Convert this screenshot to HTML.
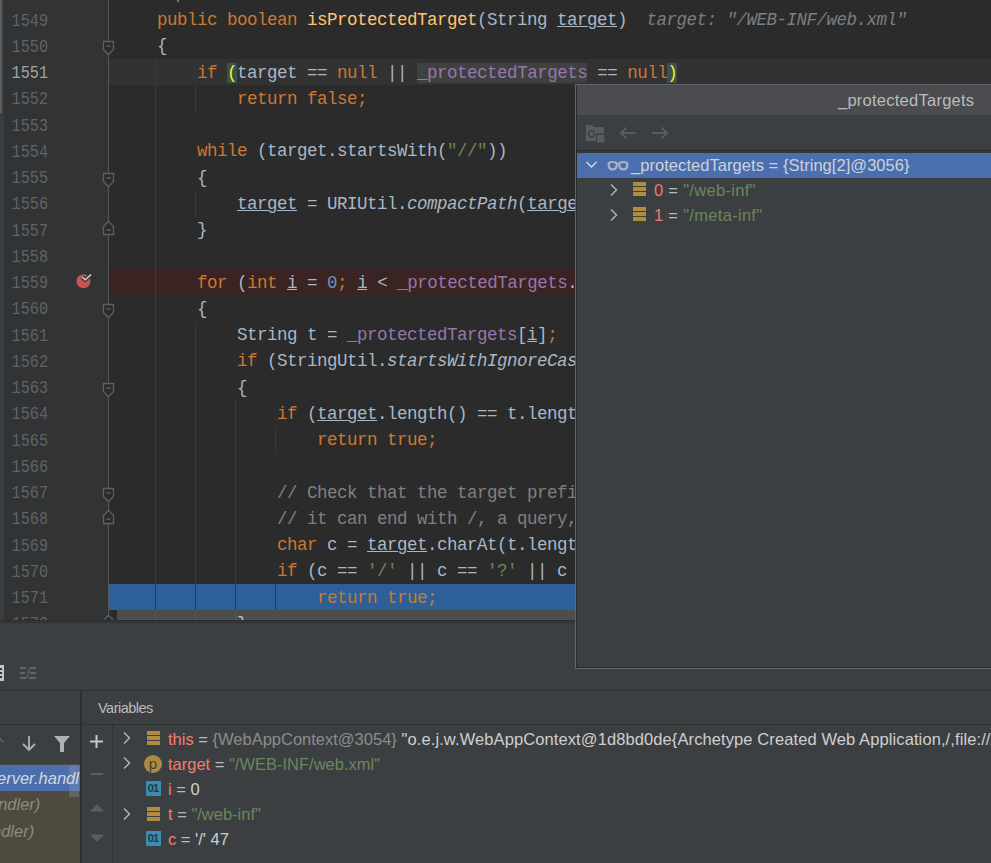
<!DOCTYPE html>
<html><head><meta charset="utf-8">
<style>
*{margin:0;padding:0;box-sizing:border-box}
html,body{width:991px;height:863px;overflow:hidden;background:#3C3F41;position:relative}
#ed{position:absolute;left:0;top:0;width:991px;height:620px;background:#2B2B2B;overflow:hidden}
#gut{position:absolute;left:4px;top:0;width:104px;height:620px;background:#313335}
#gutedge{position:absolute;left:0;top:0;width:4px;height:620px;background:#3A3D3F}
#gutedge2{position:absolute;left:0;top:0;width:2px;height:113px;background:#5C5D5F}
#gutedge3{position:absolute;left:0;top:113px;width:2px;height:507px;background:#3C3F41}
#gutline{position:absolute;left:108px;top:0;width:1px;height:620px;background:#555657}
.num{position:absolute;left:-23px;padding-top:2px;width:71px;text-align:right;height:26.25px;line-height:26.25px;font-family:"Liberation Mono",monospace;font-size:18.6px;color:#606366;transform:scaleX(0.815);transform-origin:right center}
.num.cur{color:#A4A3A3}
.ln{position:absolute;left:117px;padding-top:0.5px;height:26.25px;line-height:26.25px;white-space:pre;font-family:"Liberation Mono",monospace;font-size:17.5px;letter-spacing:-0.5px;color:#A9B7C6}
.ig{position:absolute;width:1px;background:#393939}
.bm{background:#3B514D;color:#FFEF28}
.hl{background:#404040}
.band{position:absolute;left:109px;width:882px;height:26.25px}
.fold{position:absolute;left:102px}

.tr{position:absolute;height:25px;line-height:25px;font-size:16.5px;white-space:pre}
.arr{position:absolute;width:12.5px;height:14px;background:linear-gradient(#B08B40 0 3.6px, transparent 3.6px 5.2px, #B08B40 5.2px 8.8px, transparent 8.8px 10.4px, #B08B40 10.4px 14px)}
.vn{color:#F07D72}
.eq{color:#BBBBBB}
.ui{font-family:"Liberation Sans",sans-serif}
</style></head><body>
<div id="ed">
  <div id="gut"></div>
  <div id="gutedge"></div><div id="gutedge2"></div><div id="gutedge3"></div>
  <div class="band" style="top:59.00px;background:#323232"></div>
  <div class="band" style="top:269.00px;background:#3A2323"></div>
  <div class="band" style="top:584.00px;background:#2D5F99"></div>
  <div class="ig" style="left:155px;top:59.00px;height:577.50px"></div><div class="ig" style="left:195px;top:85.25px;height:26.25px"></div><div class="ig" style="left:195px;top:190.25px;height:26.25px"></div><div class="ig" style="left:195px;top:321.50px;height:315.00px"></div><div class="ig" style="left:235px;top:400.25px;height:236.25px"></div><div class="ig" style="left:275px;top:426.50px;height:26.25px"></div><div class="ig" style="left:275px;top:584.00px;height:26.25px"></div>
  <div id="gutline"></div>
  <div class="num" style="top:-19.75px">1548</div><div class="num" style="top:6.50px">1549</div><div class="num" style="top:32.75px">1550</div><div class="num cur" style="top:59.00px">1551</div><div class="num" style="top:85.25px">1552</div><div class="num" style="top:111.50px">1553</div><div class="num" style="top:137.75px">1554</div><div class="num" style="top:164.00px">1555</div><div class="num" style="top:190.25px">1556</div><div class="num" style="top:216.50px">1557</div><div class="num" style="top:242.75px">1558</div><div class="num" style="top:269.00px">1559</div><div class="num" style="top:295.25px">1560</div><div class="num" style="top:321.50px">1561</div><div class="num" style="top:347.75px">1562</div><div class="num" style="top:374.00px">1563</div><div class="num" style="top:400.25px">1564</div><div class="num" style="top:426.50px">1565</div><div class="num" style="top:452.75px">1566</div><div class="num" style="top:479.00px">1567</div><div class="num" style="top:505.25px">1568</div><div class="num" style="top:531.50px">1569</div><div class="num" style="top:557.75px">1570</div><div class="num" style="top:584.00px">1571</div><div class="num" style="top:610.25px">1572</div>
  <div class="ln" style="top:6.50px"><span style="color:#CC7832;">    public boolean </span><span style="color:#FFC66D;">isProtectedTarget</span><span style="color:#A9B7C6;">(String </span><span style="color:#A9B7C6;text-decoration:underline;text-underline-offset:1px;text-decoration-thickness:1px;">target</span><span style="color:#A9B7C6;">)</span></div><div class="ln" style="top:32.75px"><span style="color:#A9B7C6;">    {</span></div><div class="ln" style="top:59.00px"><span style="color:#CC7832;">        if </span><span class="bm" style="">(</span><span style="color:#A9B7C6;">target == </span><span style="color:#CC7832;">null</span><span style="color:#A9B7C6;"> || </span><span class="hl" style="color:#9876AA;">_protectedTargets</span><span style="color:#A9B7C6;"> == </span><span style="color:#CC7832;">null</span><span class="bm" style="">)</span></div><div class="ln" style="top:85.25px"><span style="color:#CC7832;">            return false;</span></div><div class="ln" style="top:111.50px"></div><div class="ln" style="top:137.75px"><span style="color:#CC7832;">        while </span><span style="color:#A9B7C6;">(target.startsWith(</span><span style="color:#6A8759;">"//"</span><span style="color:#A9B7C6;">))</span></div><div class="ln" style="top:164.00px"><span style="color:#A9B7C6;">        {</span></div><div class="ln" style="top:190.25px"><span style="color:#A9B7C6;">            </span><span style="color:#A9B7C6;text-decoration:underline;text-underline-offset:1px;text-decoration-thickness:1px;">target</span><span style="color:#A9B7C6;"> = URIUtil.</span><span style="color:#A9B7C6;font-style:italic;">compactPath</span><span style="color:#A9B7C6;">(</span><span style="color:#A9B7C6;text-decoration:underline;text-underline-offset:1px;text-decoration-thickness:1px;">target</span><span style="color:#CC7832;">);</span></div><div class="ln" style="top:216.50px"><span style="color:#A9B7C6;">        }</span></div><div class="ln" style="top:242.75px"></div><div class="ln" style="top:269.00px"><span style="color:#CC7832;">        for </span><span style="color:#A9B7C6;">(</span><span style="color:#CC7832;">int </span><span style="color:#A9B7C6;text-decoration:underline;text-underline-offset:1px;text-decoration-thickness:1px;">i</span><span style="color:#A9B7C6;"> = </span><span style="color:#6897BB;">0</span><span style="color:#CC7832;">; </span><span style="color:#A9B7C6;text-decoration:underline;text-underline-offset:1px;text-decoration-thickness:1px;">i</span><span style="color:#A9B7C6;"> &lt; </span><span style="color:#9876AA;">_protectedTargets</span><span style="color:#A9B7C6;">.length; </span><span style="color:#A9B7C6;text-decoration:underline;text-underline-offset:1px;text-decoration-thickness:1px;">i</span><span style="color:#A9B7C6;">++)</span></div><div class="ln" style="top:295.25px"><span style="color:#A9B7C6;">        {</span></div><div class="ln" style="top:321.50px"><span style="color:#A9B7C6;">            String t = </span><span style="color:#9876AA;">_protectedTargets</span><span style="color:#A9B7C6;">[</span><span style="color:#A9B7C6;text-decoration:underline;text-underline-offset:1px;text-decoration-thickness:1px;">i</span><span style="color:#A9B7C6;">]</span><span style="color:#CC7832;">;</span></div><div class="ln" style="top:347.75px"><span style="color:#CC7832;">            if </span><span style="color:#A9B7C6;">(StringUtil.</span><span style="color:#A9B7C6;font-style:italic;">startsWithIgnoreCase</span><span style="color:#A9B7C6;">(</span><span style="color:#A9B7C6;text-decoration:underline;text-underline-offset:1px;text-decoration-thickness:1px;">target</span><span style="color:#A9B7C6;">, t))</span></div><div class="ln" style="top:374.00px"><span style="color:#A9B7C6;">            {</span></div><div class="ln" style="top:400.25px"><span style="color:#CC7832;">                if </span><span style="color:#A9B7C6;">(</span><span style="color:#A9B7C6;text-decoration:underline;text-underline-offset:1px;text-decoration-thickness:1px;">target</span><span style="color:#A9B7C6;">.length() == t.length())</span></div><div class="ln" style="top:426.50px"><span style="color:#CC7832;">                    return true;</span></div><div class="ln" style="top:452.75px"></div><div class="ln" style="top:479.00px"><span style="color:#808080;">                // Check that the target prefix really is a path segment, thus</span></div><div class="ln" style="top:505.25px"><span style="color:#808080;">                // it can end with /, a query, a ; or a #</span></div><div class="ln" style="top:531.50px"><span style="color:#CC7832;">                char </span><span style="color:#A9B7C6;">c = </span><span style="color:#A9B7C6;text-decoration:underline;text-underline-offset:1px;text-decoration-thickness:1px;">target</span><span style="color:#A9B7C6;">.charAt(t.length());</span></div><div class="ln" style="top:557.75px"><span style="color:#CC7832;">                if </span><span style="color:#A9B7C6;">(c == </span><span style="color:#6A8759;">'/'</span><span style="color:#A9B7C6;"> || c == </span><span style="color:#6A8759;">'?'</span><span style="color:#A9B7C6;"> || c == </span><span style="color:#6A8759;">'#'</span><span style="color:#A9B7C6;">)</span></div><div class="ln" style="top:584.00px"><span style="color:#CC7832;">                    return true;</span></div><div class="ln" style="top:610.25px"><span style="color:#A9B7C6;">            }</span></div>
  <div class="ln" style="top:6.50px;left:646.5px;color:#7A7E85;font-style:italic">target: "/WEB-INF/web.xml"</div>
  <svg class="fold" style="top:40.38px" width="13" height="16" viewBox="0 0 13 16"><path d="M1.5 1.5 H11.5 V9.5 L6.5 14.5 L1.5 9.5 Z" fill="#2B2B2B" stroke="#5F6062" stroke-width="1.3"/><path d="M4.5 6 H8.5" stroke="#7A7B7D" stroke-width="1"/></svg><svg class="fold" style="top:171.62px" width="13" height="16" viewBox="0 0 13 16"><path d="M1.5 1.5 H11.5 V9.5 L6.5 14.5 L1.5 9.5 Z" fill="#2B2B2B" stroke="#5F6062" stroke-width="1.3"/><path d="M4.5 6 H8.5" stroke="#7A7B7D" stroke-width="1"/></svg><svg class="fold" style="top:220.12px" width="13" height="16" viewBox="0 0 13 16"><path d="M1.5 14.5 H11.5 V6.5 L6.5 1.5 L1.5 6.5 Z" fill="#2B2B2B" stroke="#5F6062" stroke-width="1.3"/><path d="M4.5 10 H8.5" stroke="#7A7B7D" stroke-width="1"/></svg><svg class="fold" style="top:302.88px" width="13" height="16" viewBox="0 0 13 16"><path d="M1.5 1.5 H11.5 V9.5 L6.5 14.5 L1.5 9.5 Z" fill="#2B2B2B" stroke="#5F6062" stroke-width="1.3"/><path d="M4.5 6 H8.5" stroke="#7A7B7D" stroke-width="1"/></svg><svg class="fold" style="top:381.62px" width="13" height="16" viewBox="0 0 13 16"><path d="M1.5 1.5 H11.5 V9.5 L6.5 14.5 L1.5 9.5 Z" fill="#2B2B2B" stroke="#5F6062" stroke-width="1.3"/><path d="M4.5 6 H8.5" stroke="#7A7B7D" stroke-width="1"/></svg><svg class="fold" style="top:486.62px" width="13" height="16" viewBox="0 0 13 16"><path d="M1.5 1.5 H11.5 V9.5 L6.5 14.5 L1.5 9.5 Z" fill="#2B2B2B" stroke="#5F6062" stroke-width="1.3"/><path d="M4.5 6 H8.5" stroke="#7A7B7D" stroke-width="1"/></svg><svg class="fold" style="top:508.88px" width="13" height="16" viewBox="0 0 13 16"><path d="M1.5 14.5 H11.5 V6.5 L6.5 1.5 L1.5 6.5 Z" fill="#2B2B2B" stroke="#5F6062" stroke-width="1.3"/><path d="M4.5 10 H8.5" stroke="#7A7B7D" stroke-width="1"/></svg><svg class="fold" style="top:613.88px" width="13" height="16" viewBox="0 0 13 16"><path d="M1.5 14.5 H11.5 V6.5 L6.5 1.5 L1.5 6.5 Z" fill="#2B2B2B" stroke="#5F6062" stroke-width="1.3"/><path d="M4.5 10 H8.5" stroke="#7A7B7D" stroke-width="1"/></svg>
  <svg style="position:absolute;left:74px;top:270px" width="20" height="20" viewBox="0 0 20 20"><circle cx="9.5" cy="11.3" r="7" fill="#C75450"/><path d="M8 7 L11.3 9.8 L17 4.5" fill="none" stroke="#2B2B2B" stroke-width="4"/><path d="M8 7 L11.3 9.8 L17 4.5" fill="none" stroke="#BDBDBD" stroke-width="1.8"/></svg>
  <div style="position:absolute;left:117px;top:610px;width:874px;height:10px;background:rgba(255,255,255,0.165)"></div>
</div>
<div style="position:absolute;left:0;top:620px;width:991px;height:1px;background:#2B2B2B"></div><div style="position:absolute;left:0;top:621px;width:991px;height:1px;background:#37393B"></div><div style="position:absolute;left:0;top:622px;width:991px;height:1px;background:#2E3031"></div>

<!-- bottom panel -->
<div style="position:absolute;left:0;top:623px;width:991px;height:240px;background:#3C3F41"></div>
<div style="position:absolute;left:-3px;top:665px;width:7px;height:16px;background:#C4C4C4"></div>
<div style="position:absolute;left:0;top:668px;width:2px;height:2px;background:#333"></div>
<div style="position:absolute;left:0;top:672px;width:2px;height:2px;background:#333"></div>
<div style="position:absolute;left:0;top:676px;width:2px;height:2px;background:#333"></div>
<svg style="position:absolute;left:19px;top:665px" width="18" height="16" viewBox="0 0 18 16"><path d="M1 3 H7 M1 8 H6 M1 13 H7 M11 3 H17 M11 8 H17 M10 13 H17" stroke="#646566" stroke-width="2"/><path d="M8 13 L10.5 3" stroke="#646566" stroke-width="1.2"/></svg>
<div style="position:absolute;left:0;top:689.5px;width:991px;height:1.5px;background:#2F3032"></div>
<div class="ui" style="position:absolute;left:98px;top:700px;font-size:14.5px;letter-spacing:-0.5px;color:#BBBBBB">Variables</div>
<div style="position:absolute;left:0;top:724px;width:991px;height:1px;background:#323232"></div>
<div style="position:absolute;left:80px;top:691px;width:2px;height:172px;background:#2E2F30"></div>
<div style="position:absolute;left:112px;top:725px;width:1px;height:138px;background:#323232"></div>
<!-- frames -->
<svg style="position:absolute;left:-6px;top:735px" width="10" height="16" viewBox="0 0 10 16"><path d="M0.5 7.5 L5 3 L9.5 7.5" fill="none" stroke="#5A5D5F" stroke-width="1.8"/></svg>
<svg style="position:absolute;left:20px;top:734px" width="18" height="18" viewBox="0 0 18 18"><path d="M9 2 V16 M3 10 L9 16 L15 10" fill="none" stroke="#AFB1B3" stroke-width="1.8"/></svg>
<svg style="position:absolute;left:53px;top:735px" width="18" height="18" viewBox="0 0 18 18"><path d="M1 1 H17 L11 8 V17 H7 V8 Z" fill="#AFB1B3"/></svg>
<div style="position:absolute;left:0;top:764px;width:80px;height:99px;background:#4E4A3D"></div>
<div style="position:absolute;left:0;top:765px;width:80px;height:26px;background:#4B6EAF"></div>
<div style="position:absolute;left:69px;top:765px;width:10px;height:32px;background:rgba(140,150,170,0.35)"></div>
<div class="ui" style="position:absolute;left:-3px;top:769px;font-size:16.5px;font-style:italic;color:#D4D8DE;white-space:pre">erver.handl</div>
<div class="ui" style="position:absolute;left:-11px;top:795px;font-size:16.5px;font-style:italic;color:#8E8B82;white-space:pre">andler)</div>
<div class="ui" style="position:absolute;left:-8px;top:822px;font-size:16.5px;font-style:italic;color:#8E8B82;white-space:pre">ndler)</div>
<!-- var toolbar -->
<svg style="position:absolute;left:89px;top:734px" width="15" height="15" viewBox="0 0 15 15"><path d="M7.5 1 V14 M1 7.5 H14" stroke="#C8C8C8" stroke-width="2"/></svg>
<div style="position:absolute;left:91px;top:773px;width:12px;height:2px;background:#5A5D5F"></div>
<svg style="position:absolute;left:89px;top:802px" width="16" height="10" viewBox="0 0 16 10"><path d="M1 9.5 L8 2 L15 9.5 Z" fill="#5A5D5F"/></svg>
<svg style="position:absolute;left:89px;top:834px" width="16" height="10" viewBox="0 0 16 10"><path d="M1 0.5 L8 8 L15 0.5 Z" fill="#5A5D5F"/></svg>
<!-- variables tree -->
<svg style="position:absolute;left:122px;top:731.4px" width="10" height="14" viewBox="0 0 10 14"><path d="M2 1.5 L7.5 7 L2 12.5" fill="none" stroke="#AFB1B3" stroke-width="1.5"/></svg>
<div class="arr" style="left:147px;top:731.4px"></div>
<div class="ui tr" style="left:168px;top:726.9px"><span class="vn">this</span><span class="eq"> = </span><span style="color:#8C8C8C">{WebAppContext@3054}</span><span style="color:#CFCFCF;letter-spacing:0.1px"> "o.e.j.w.WebAppContext@1d8bd0de{Archetype Created Web Application,/,file:///D:/</span></div>
<svg style="position:absolute;left:122px;top:756.4px" width="10" height="14" viewBox="0 0 10 14"><path d="M2 1.5 L7.5 7 L2 12.5" fill="none" stroke="#AFB1B3" stroke-width="1.5"/></svg>
<div style="position:absolute;left:144px;top:755.2px;width:18px;height:18px;border-radius:50%;background:#AD8A44;color:#3C3F41;font:15px 'Liberation Sans';text-align:center;line-height:17px">p</div>
<div class="ui tr" style="left:168px;top:751.9px"><span class="vn">target</span><span class="eq"> = </span><span style="color:#6A8759">"/WEB-INF/web.xml"</span></div>
<div style="position:absolute;left:145.5px;top:781.3px;width:15px;height:15px;background:#3A8DAF;color:#263844;font:bold 11px 'Liberation Sans';text-align:center;line-height:15px;letter-spacing:-0.8px">01</div>
<div class="ui tr" style="left:168px;top:777.0px"><span class="vn">i</span><span class="eq"> = </span><span style="color:#CFCFCF">0</span></div>
<svg style="position:absolute;left:122px;top:806.5px" width="10" height="14" viewBox="0 0 10 14"><path d="M2 1.5 L7.5 7 L2 12.5" fill="none" stroke="#AFB1B3" stroke-width="1.5"/></svg>
<div class="arr" style="left:147px;top:806.5px"></div>
<div class="ui tr" style="left:168px;top:802.0px"><span class="vn">t</span><span class="eq"> = </span><span style="color:#6A8759">"/web-inf"</span></div>
<div style="position:absolute;left:145.5px;top:831.3px;width:15px;height:15px;background:#3A8DAF;color:#263844;font:bold 11px 'Liberation Sans';text-align:center;line-height:15px;letter-spacing:-0.8px">01</div>
<div class="ui tr" style="left:168px;top:827.1px"><span class="vn">c</span><span class="eq"> = </span><span style="color:#CFCFCF">'/' 47</span></div>

<!-- popup -->
<div id="pop" style="position:absolute;left:575px;top:84px;width:420px;height:585px;background:#646566;">
  <div style="position:absolute;left:1px;top:1px;right:0;bottom:1px;background:#2B2B2B"></div>
  <div style="position:absolute;left:2px;top:1px;right:0;height:30px;background:#4A4C4F"></div>
  <div class="ui" style="position:absolute;left:263px;top:7px;font-size:16.5px;letter-spacing:0.25px;color:#BBBBBB;white-space:pre">_protectedTargets</div>
  <div style="position:absolute;left:2px;top:31px;right:0;height:35px;background:#3C3F41"></div>
  <svg style="position:absolute;left:10px;top:40px" width="22" height="22" viewBox="0 0 22 22">
    <path d="M1 1 H7 L9 3 H19 V9.5 H11 V17 H1 Z" fill="#595B5D"/>
    <circle cx="6.5" cy="10" r="3" fill="none" stroke="#3C3F41" stroke-width="1.3"/>
    <rect x="12" y="11" width="7.5" height="7.5" fill="#595B5D"/>
  </svg>
  <svg style="position:absolute;left:43px;top:41px" width="20" height="16" viewBox="0 0 20 16"><path d="M17.5 8 H3 M8.5 2.5 L3 8 L8.5 13.5" fill="none" stroke="#595B5D" stroke-width="2"/></svg>
  <svg style="position:absolute;left:75px;top:41px" width="20" height="16" viewBox="0 0 20 16"><path d="M2 8 H17 M11.5 2.5 L17 8 L11.5 13.5" fill="none" stroke="#595B5D" stroke-width="2"/></svg>
  <div style="position:absolute;left:2px;top:66px;right:0;bottom:2px;background:#3C3F41"></div>
  <div style="position:absolute;left:2px;top:66px;right:0;height:3px;background:#333537"></div><div style="position:absolute;left:2px;top:66px;right:0;height:1px;background:#2B2B2B"></div>
  <div style="position:absolute;left:2px;top:69px;right:0;height:25px;background:#4B6EAF"></div>
  <svg style="position:absolute;left:10px;top:75.5px" width="14" height="10" viewBox="0 0 14 10"><path d="M1.5 2 L6.5 7 L11.5 2" fill="none" stroke="#D6D6D6" stroke-width="1.5"/></svg>
  <svg style="position:absolute;left:32px;top:75.5px" width="22" height="12" viewBox="0 0 22 12"><path d="M1.6 4.2 C1.6 2.4 3.2 2 5.7 2 C8.2 2 9.8 2.4 9.8 4.2 C9.8 7.6 8 9.4 5.7 9.4 C3.4 9.4 1.6 7.6 1.6 4.2 Z M12.2 4.2 C12.2 2.4 13.8 2 16.3 2 C18.8 2 20.4 2.4 20.4 4.2 C20.4 7.6 18.6 9.4 16.3 9.4 C14 9.4 12.2 7.6 12.2 4.2 Z" fill="none" stroke="#A9B3C3" stroke-width="2.2"/><path d="M9.8 4 H12.2" stroke="#A9B3C3" stroke-width="1.8"/></svg>
  <div class="ui tr" style="left:56px;top:69px;color:#CDD2DA;letter-spacing:0.05px">_protectedTargets = {String[2]@3056}</div>
  <svg style="position:absolute;left:34px;top:99px" width="10" height="14" viewBox="0 0 10 14"><path d="M2 1.5 L7.5 7 L2 12.5" fill="none" stroke="#AFB1B3" stroke-width="1.5"/></svg>
  <div class="arr" style="left:58px;top:98px"></div>
  <div class="ui tr" style="left:79px;top:94px;letter-spacing:0.3px"><span style="color:#F07870">0</span><span style="color:#BBBBBB"> = </span><span style="color:#6A8759">"/web-inf"</span></div>
  <svg style="position:absolute;left:34px;top:124px" width="10" height="14" viewBox="0 0 10 14"><path d="M2 1.5 L7.5 7 L2 12.5" fill="none" stroke="#AFB1B3" stroke-width="1.5"/></svg>
  <div class="arr" style="left:58px;top:123px"></div>
  <div class="ui tr" style="left:79px;top:119px;letter-spacing:0.3px"><span style="color:#F07870">1</span><span style="color:#BBBBBB"> = </span><span style="color:#6A8759">"/meta-inf"</span></div>
</div>

<div style="position:absolute;left:177px;top:0;width:2px;height:1.5px;background:#6A8759"></div>
</body></html>
